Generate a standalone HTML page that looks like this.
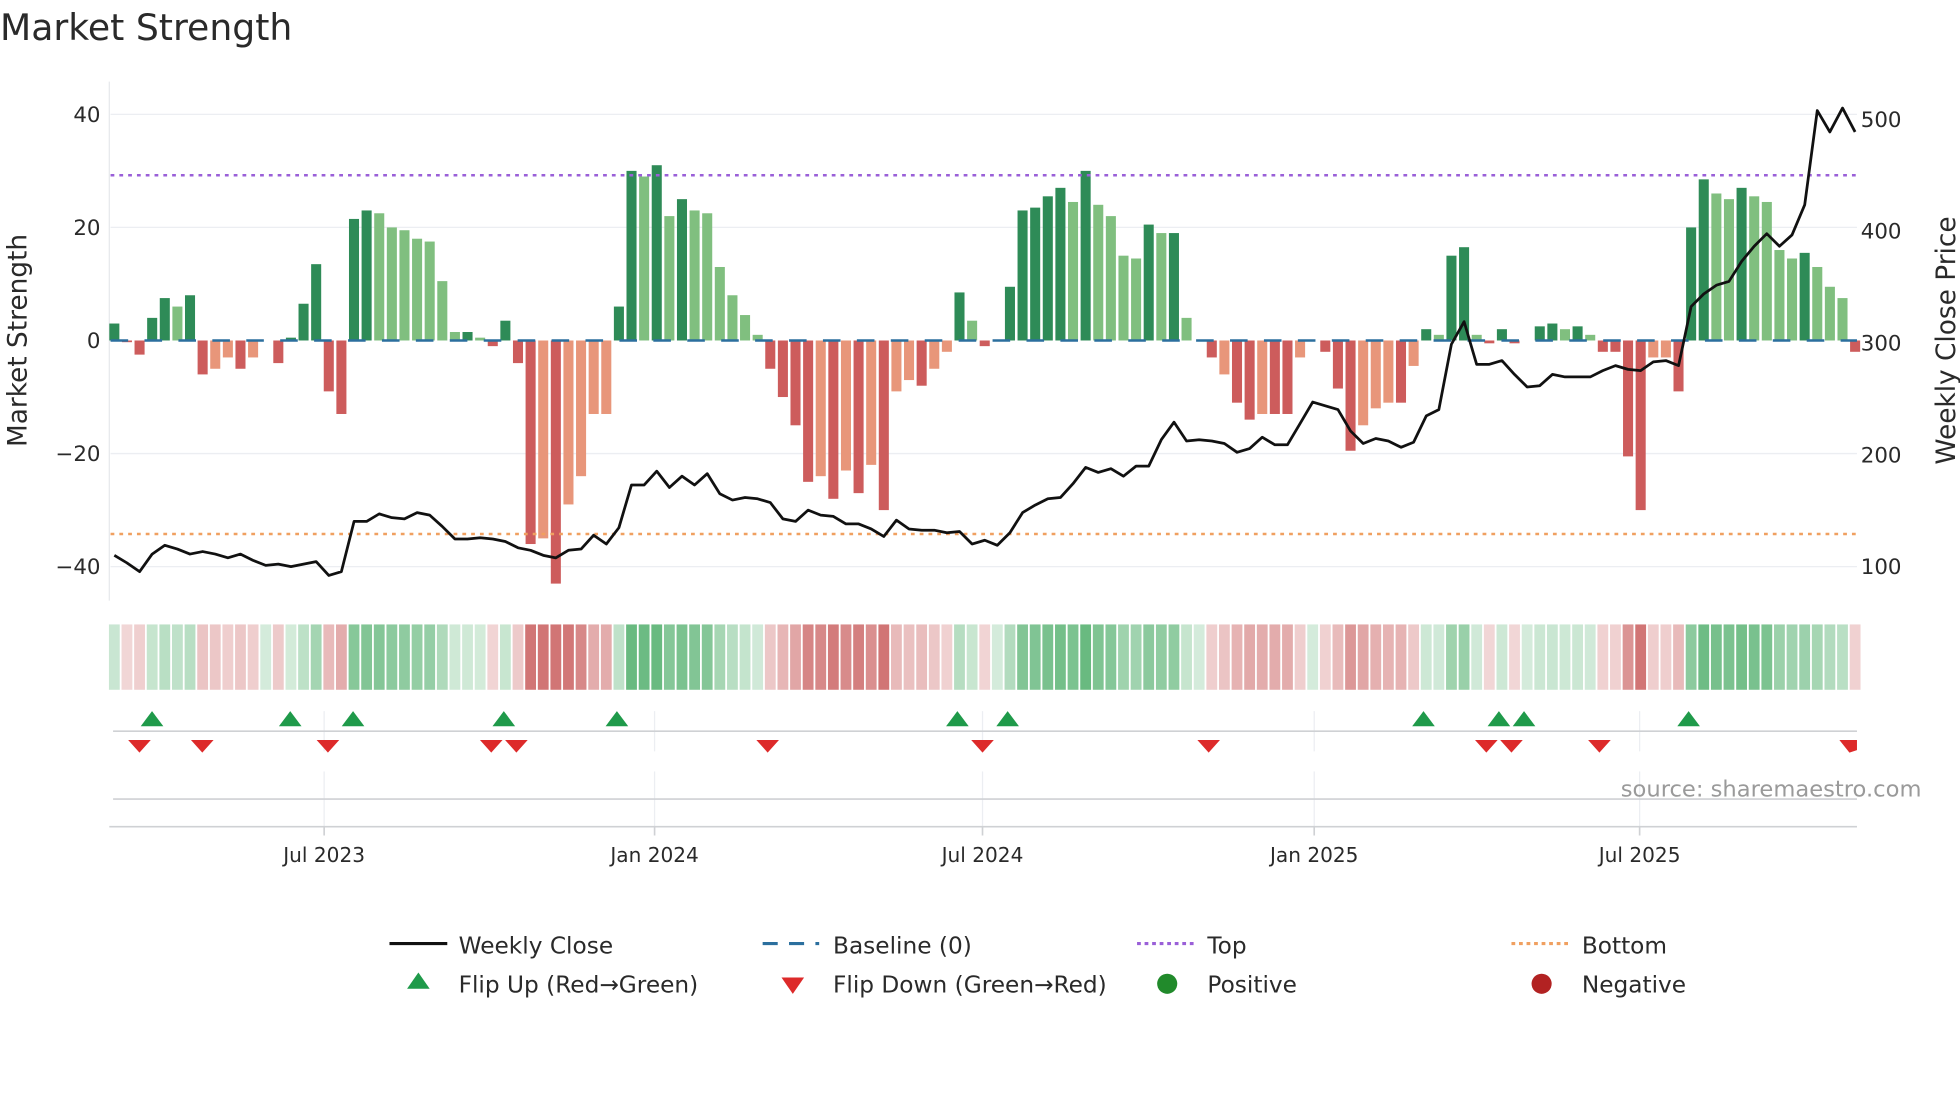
<!DOCTYPE html>
<html><head><meta charset="utf-8"><style>
html,body{margin:0;padding:0;background:#fff;width:1960px;height:1102px;overflow:hidden}
svg{display:block}
text{font-family:"DejaVu Sans","Liberation Sans",sans-serif;fill:#2a2a2a}
</style></head><body>
<svg id="s" width="1960" height="1102" viewBox="0 0 1560 877.1" xmlns="http://www.w3.org/2000/svg">
<text x="0" y="32" font-size="28.8">Market Strength</text>
<g stroke="#eceef2" stroke-width="1">
<line x1="88" y1="91" x2="1478" y2="91"/><line x1="88" y1="181" x2="1478" y2="181"/>
<line x1="88" y1="361" x2="1478" y2="361"/><line x1="88" y1="451" x2="1478" y2="451"/>
</g>
<line x1="87" y1="65" x2="87" y2="478" stroke="#e6e8ec" stroke-width="1"/>
<g font-size="17" text-anchor="end">
<text x="80" y="97">40</text><text x="80" y="187">20</text><text x="80" y="277">0</text>
<text x="80" y="367">−20</text><text x="80" y="457">−40</text>
</g>
<g font-size="17">
<text x="1481" y="101">500</text><text x="1481" y="190">400</text><text x="1481" y="279">300</text>
<text x="1481" y="368">200</text><text x="1481" y="457">100</text>
</g>
<text transform="translate(21,271) rotate(-90)" font-size="21" text-anchor="middle">Market Strength</text>
<text transform="translate(1556,271) rotate(-90)" font-size="21" text-anchor="middle">Weekly Close Price</text>
<g id="bars"></g>
<line x1="88" y1="271" x2="1478" y2="271" stroke="#2b6f9e" stroke-width="2" stroke-dasharray="14,13"/>
<line x1="88" y1="139.5" x2="1478" y2="139.5" stroke="#9a5fd8" stroke-width="2" stroke-dasharray="3,4"/>
<line x1="88" y1="425" x2="1478" y2="425" stroke="#f0a060" stroke-width="2" stroke-dasharray="3,4"/>
<polyline id="price" fill="none" stroke="#111" stroke-width="2.2" stroke-linejoin="round"/>
<g id="heat"></g>
<g stroke="#eceef2" stroke-width="1">
<line x1="258" y1="566" x2="258" y2="598"/><line x1="521" y1="566" x2="521" y2="598"/>
<line x1="782" y1="566" x2="782" y2="598"/><line x1="1046" y1="566" x2="1046" y2="598"/>
<line x1="1305" y1="566" x2="1305" y2="598"/>
<line x1="258" y1="614" x2="258" y2="658"/><line x1="521" y1="614" x2="521" y2="658"/>
<line x1="782" y1="614" x2="782" y2="658"/><line x1="1046" y1="614" x2="1046" y2="658"/>
<line x1="1305" y1="614" x2="1305" y2="658"/>
</g>
<line x1="90" y1="582" x2="1478" y2="582" stroke="#cfd1d4" stroke-width="1.3"/>
<line x1="90" y1="636" x2="1478" y2="636" stroke="#cfd1d4" stroke-width="1.3"/>
<line x1="87" y1="658" x2="1478" y2="658" stroke="#cfd1d4" stroke-width="1.3"/>
<g stroke="#cfd1d4" stroke-width="1.3">
<line x1="258" y1="658" x2="258" y2="665"/><line x1="521" y1="658" x2="521" y2="665"/>
<line x1="782" y1="658" x2="782" y2="665"/><line x1="1046" y1="658" x2="1046" y2="665"/>
<line x1="1305" y1="658" x2="1305" y2="665"/>
</g>
<g id="flips"></g>
<text x="1290" y="634" font-size="18" style="fill:#9a9a9a">source: sharemaestro.com</text>
<g font-size="16" text-anchor="middle">
<text x="258" y="686">Jul 2023</text><text x="521" y="686">Jan 2024</text><text x="782" y="686">Jul 2024</text>
<text x="1046" y="686">Jan 2025</text><text x="1305" y="686">Jul 2025</text>
</g>
<g font-size="18.5">
<line x1="310" y1="751" x2="356" y2="751" stroke="#111" stroke-width="2.5"/>
<text x="365" y="759">Weekly Close</text>
<line x1="607" y1="751" x2="652" y2="751" stroke="#2b6f9e" stroke-width="2.5" stroke-dasharray="12,9"/>
<text x="663" y="759">Baseline (0)</text>
<line x1="905" y1="751" x2="950" y2="751" stroke="#9a5fd8" stroke-width="2.5" stroke-dasharray="3,3"/>
<text x="961" y="759">Top</text>
<line x1="1203" y1="751" x2="1248" y2="751" stroke="#f0a060" stroke-width="2.5" stroke-dasharray="3,3"/>
<text x="1259" y="759">Bottom</text>
<polygon points="333,774 342,787 324,787" fill="#1f9a4a"/>
<text x="365" y="790">Flip Up (Red→Green)</text>
<polygon points="622,778 640,778 631,791" fill="#dd2a2a"/>
<text x="663" y="790">Flip Down (Green→Red)</text>
<circle cx="929" cy="783" r="8" fill="#218a2b"/>
<text x="961" y="790">Positive</text>
<circle cx="1227" cy="783" r="8" fill="#b22222"/>
<text x="1259" y="790">Negative</text>
</g>
</svg>
<script>
var V=[3,-0.3,-2.5,4,7.5,6,8,-6,-5,-3,-5,-3,0,-4,0.5,6.5,13.5,-9,-13,21.5,23,22.5,20,19.5,18,17.5,10.5,1.5,1.5,0.5,-1,3.5,-4,-36,-35,-43,-29,-24,-13,-13,6,30,29,31,22,25,23,22.5,13,8,4.5,1,-5,-10,-15,-25,-24,-28,-23,-27,-22,-30,-9,-7,-8,-5,-2,8.5,3.5,-1,0,9.5,23,23.5,25.5,27,24.5,30,24,22,15,14.5,20.5,19,19,4,0,-3,-6,-11,-14,-13,-13,-13,-3,0,-2,-8.5,-19.5,-15,-12,-11,-11,-4.5,2,1,15,16.5,1,-0.5,2,-0.5,0,2.5,3,2,2.5,1,-2,-2,-20.5,-30,-3,-3,-9,20,28.5,26,25,27,25.5,24.5,16,14.5,15.5,13,9.5,7.5,-2];
var D=["D RDDLDROO","RO RDDDRRD","DLLLLLLLDL","RDRROROOOO","DDLDLDLLLL","LLRRRRORОR".replace("О","O"),"OROOROODLR"," DDDDDLDLL","LLDLDL ROR","RORRO RRRO","OOROLDDDLR".replace("OOROL","OOROD").replace("OORODDDDLR","OORODLDDLR"),"DR DDLDLRR","RROORDDLLD","LLLLDLLLR"].join("");
var ns="http://www.w3.org/2000/svg",b=document.getElementById('bars'),h=document.getElementById('heat');
function el(t,a,p){var e=document.createElementNS(ns,t);for(var k in a)e.setAttribute(k,a[k]);p.appendChild(e);return e}
for(var i=0;i<V.length;i++){
 var x=91+i*10.04,v=V[i],c=D[i]||' ';
 var col = v>=0 ? (c=='L'?'#80bf7f':'#2e8b57') : (c=='O'?'#e8967a':'#cd5c5c');
 if(Math.abs(v)>0.2){var y0=271,y1=271-v*4.5;el('rect',{x:x-4,y:Math.min(y0,y1),width:8,height:Math.abs(y1-y0),fill:col},b);}
 var m=Math.min(Math.abs(v)/30,1),a=0.22+0.55*m;
 var hc= v>=0 ? 'rgba(60,165,90,'+a+')' : 'rgba(195,75,75,'+a+')';
 el('rect',{x:x-4.3,y:497,width:8.6,height:52,fill:hc},h);
}
var P=[442,448,455,441,434,437,441,439,441,444,441,446,450,449,451,449,447,458,455,415,415,409,412,413,408,410,419,429,429,428,429,431,436,438,442,444,438,437,426,433,420,386,386,375,388,379,386,377,393,398,396,397,400,413,415,406,410,411,417,417,421,427,414,421,422,422,424,423,433,430,434,424,408,402,397,396,385,372,376,373,379,371,371,350,336,351,350,351,353,360,357,348,354,354,337,320,323,326,343,353,349,351,356,352,331,326,274,256,290,290,287,298,308,307,298,300,300,300,295,291,294,295,288,287,291,244,234,227,224,208,196,186,196,187,163,88,105,86,105];
document.getElementById('price').setAttribute('points',P.map(function(y,i){return (91+i*10.04).toFixed(1)+','+y}).join(' '));
var f=document.getElementById('flips');
[121,231,281,401,491,762,802,1133,1193,1213,1344].forEach(function(x){el('polygon',{points:x+',566 '+(x+9)+',578 '+(x-9)+',578',fill:'#1f9a4a'},f)});
[111,161,261,391,411,611,782,962,1183,1203,1273].forEach(function(x){el('polygon',{points:(x-9)+',589 '+(x+9)+',589 '+x+',599',fill:'#dd2a2a'},f)});
el('polygon',{points:'1464,589 1478,589 1478,597 1472,599',fill:'#dd2a2a'},f);
</script>
</body></html>
